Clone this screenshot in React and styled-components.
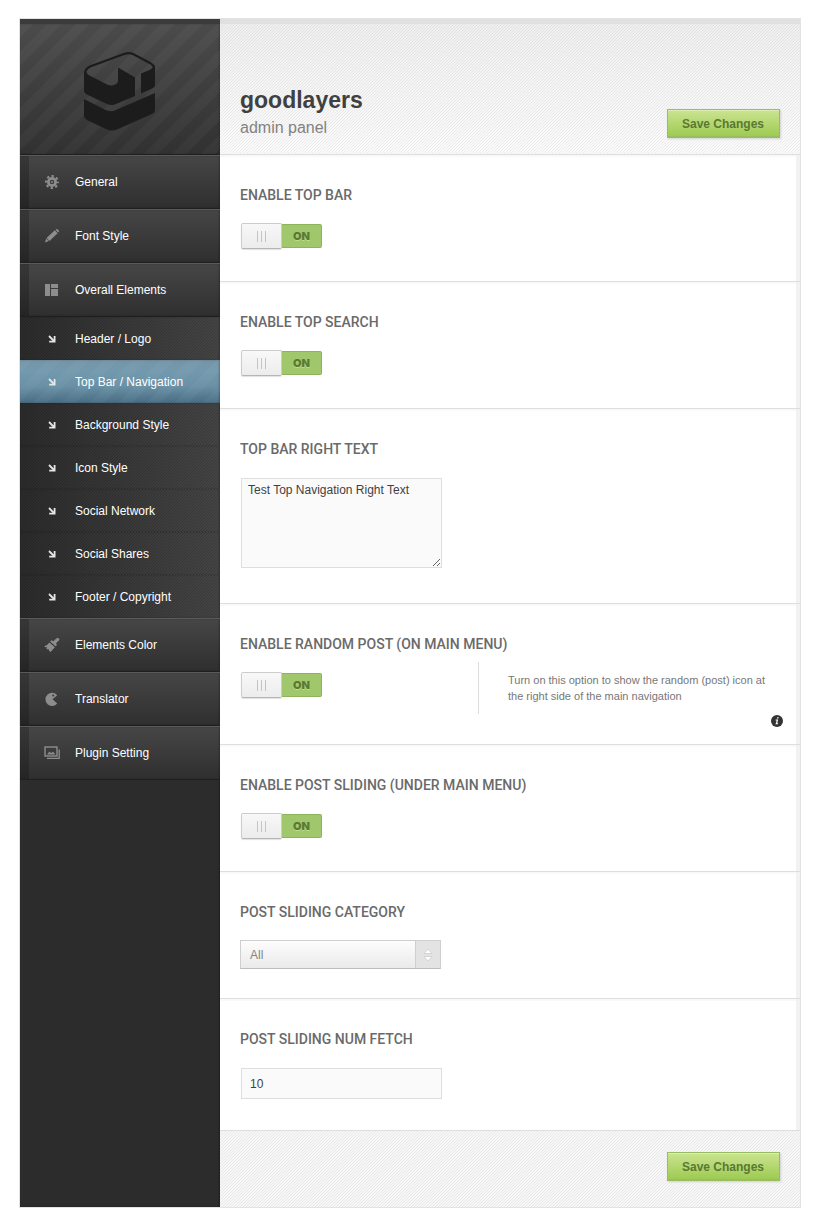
import React from 'react';
import styled, { createGlobalStyle, css } from 'styled-components';

const GlobalStyle = createGlobalStyle`
  body {
    margin: 0;
    background-color: #ffffff;
    font-family: "Liberation Sans", Arial, sans-serif;
    font-size: 12px;
  }

  *,
  *::before,
  *::after {
    box-sizing: border-box;
  }
`;

const hatch = css`
  background-image:
    linear-gradient(135deg, transparent 42%, rgba(0, 0, 0, 0.06) 42% 58%, transparent 58%),
    linear-gradient(${({ $flat }) => ($flat ? '#f7f7f7, #f7f7f7' : '#efefef, #fbfbfb')});
  background-size: 3px 3px, auto;
`;

const stripes = css`
  repeating-linear-gradient(135deg, rgba(255, 255, 255, 0.03) 0 9px, transparent 10px 19px, rgba(255, 255, 255, 0.03) 20px)
`;

const Panel = styled.div`
  display: grid;
  grid-template-columns: 200px 1fr;
  margin: 18px 17px 5px 19px;
  border: 1px solid #e3e3e3;
`;

const Sidebar = styled.aside`
  background-color: #2c2c2c;
  box-shadow: inset -1px 0 2px rgba(0, 0, 0, 0.3);
`;

const Brand = styled.div`
  display: flex;
  justify-content: center;
  height: 136px;
  padding-top: 28px;
  border-top: 5px solid #3b3b3b;
  border-bottom: 1px solid #1f1f1f;
  background-image: ${stripes}, linear-gradient(#4b4b4b, #313131);
  box-shadow: inset -1px 0 2px rgba(0, 0, 0, 0.2);
`;

const Menu = styled.ul`
  list-style: none;
  margin: 0;
  padding: 0;
`;

const MenuLink = styled.a`
  display: flex;
  align-items: center;
  height: 54px;
  border-top: 1px solid #5a5a5a;
  border-bottom: 1px solid #1f1f1f;
  background-image:
    linear-gradient(90deg, rgba(0, 0, 0, 0.22) 0 9px, transparent 9px),
    linear-gradient(#464646, #2f2f2f);
  box-shadow: inset -1px 0 2px rgba(0, 0, 0, 0.25);
  color: #ffffff;
  text-decoration: none;
`;

const MenuIcon = styled.span`
  display: flex;
  justify-content: center;
  width: 55px;
  padding-left: 9px;
  color: #8d8d8d;
`;

const SubLink = styled.a`
  display: flex;
  align-items: center;
  height: 43px;
  background-image: ${({ $active }) => ($active
    ? css`${stripes}, linear-gradient(#7395a8, #7399ae 25%, #6a91a6 60%, #496d83)`
    : css`
      linear-gradient(135deg, transparent 42%, rgba(0, 0, 0, 0.16) 42% 58%, transparent 58%),
      linear-gradient(90deg, #2b2b2b, #454545)
    `)};
  background-size: ${({ $active }) => ($active ? 'auto' : '3px 3px, auto')};
  box-shadow: inset -1px 0 2px rgba(0, 0, 0, 0.25);
  color: #ffffff;
  text-decoration: none;
`;

const Content = styled.main`
  display: flex;
  flex-direction: column;
  min-width: 0;
`;

const Header = styled.header`
  display: flex;
  justify-content: space-between;
  align-items: flex-end;
  height: 136px;
  padding: 0 20px 16px;
  border-top: 5px solid #e0e0e0;
  border-bottom: 1px solid #dedede;
  ${hatch}
`;

const Brandline = styled.div`
  margin-bottom: -4px;
`;

const Title = styled.h1`
  margin: 0;
  color: #404040;
  font-size: 23px;
  line-height: 28px;
`;

const Subtitle = styled.p`
  margin: 0;
  color: #828282;
  font-size: 16px;
  line-height: 28px;
`;

const SaveButton = styled.button`
  height: 29px;
  padding: 1px 15px 0 14px;
  border: 1px solid #98bd62;
  border-bottom-width: 2px;
  background-image: linear-gradient(#cbe490, #9ecb53);
  box-shadow: inset 0 1px 0 #dcedb0, 1px 1px 2px rgba(0, 0, 0, 0.15);
  color: #5b7833;
  font-family: inherit;
  font-size: 12px;
  font-weight: bold;
`;

const Section = styled.section`
  position: relative;
  padding: 30px 20px 29px;
  border-bottom: 1px solid #dedede;
  background-color: #ffffff;
  box-shadow: inset -4px 0 0 #f2f2f2, inset 0 2px 1px #f9f9f9;
`;

const Label = styled.label`
  display: block;
  margin-bottom: 18px;
  color: #6a6a6a;
  font-family: Roboto, Arial, sans-serif;
  font-size: 14px;
  font-weight: 500;
  line-height: 20px;
`;

const Row = styled.div`
  display: grid;
  grid-template-columns: 238px 1fr;
  align-items: start;
  min-height: 29px;
`;

const Switch = styled.span`
  position: relative;
  display: flex;
  width: 81px;
  height: 26px;
  margin-left: 1px;

  input {
    position: absolute;
    inset: 0;
    width: 100%;
    height: 100%;
    margin: 0;
    opacity: 0;
    cursor: pointer;
  }
`;

const Knob = styled.span`
  display: flex;
  align-items: center;
  justify-content: center;
  gap: 3px;
  width: 41px;
  height: 26px;
  border: 1px solid #cccccc;
  border-bottom-color: #b5b5b5;
  border-radius: 2px;
  background-image: linear-gradient(#f8f8f8, #ececec);
  box-shadow: 0 1px 1px rgba(0, 0, 0, 0.12);

  i {
    width: 1px;
    height: 11px;
    background-color: #c4c4c4;
  }
`;

const OnState = styled.span`
  flex: 1;
  height: 24px;
  margin-top: 1px;
  border: 1px solid #8db35b;
  border-left: 0;
  border-radius: 0 2px 2px 0;
  background-color: #a0c76b;
  color: #5a7b32;
  font-family: Inter, sans-serif;
  font-size: 11px;
  font-weight: 900;
  line-height: 22px;
  text-align: center;
  text-shadow: 0 1px 0 #bcdc8f;
`;

const TextArea = styled.textarea`
  display: block;
  width: 201px;
  height: 90px;
  margin: 1px 1px 6px;
  padding: 4px 6px;
  border: 1px solid #dedede;
  background-color: #fafafa;
  color: #3f3f3f;
  font-family: inherit;
  font-size: 12px;
  line-height: 14px;
`;

const TextInput = styled.input`
  width: 201px;
  height: 31px;
  margin: 1px 1px 2px;
  padding: 0 8px;
  border: 1px solid #dedede;
  background-color: #fafafa;
  color: #3f3f3f;
  font-family: inherit;
  font-size: 12px;
`;

const SelectBox = styled.div`
  position: relative;
  width: 201px;
  height: 29px;

  select {
    appearance: none;
    width: 100%;
    height: 100%;
    padding: 0 36px 0 9px;
    border: 1px solid #cfcfcf;
    border-bottom-color: #bdbdbd;
    border-radius: 0;
    background-image: linear-gradient(#fdfdfd, #eaeaea);
    color: #858585;
    font-family: inherit;
    font-size: 12px;
  }
`;

const SelectArrows = styled.span`
  position: absolute;
  top: 1px;
  right: 1px;
  bottom: 1px;
  display: flex;
  align-items: center;
  justify-content: center;
  width: 25px;
  border-left: 1px solid #cfcfcf;
  background-color: #e3e3e3;
  pointer-events: none;
`;

const Description = styled.p`
  margin: -10px 0 1px;
  padding: 10px 0 10px 29px;
  border-left: 1px solid #dcdcdc;
  color: #777777;
  font-size: 11px;
  line-height: 16px;
`;

const InfoMark = styled.span`
  position: absolute;
  right: 17px;
  bottom: 17px;
  display: flex;
`;

const Footer = styled.footer`
  display: flex;
  justify-content: flex-end;
  align-items: flex-start;
  flex: 1;
  min-height: 76px;
  padding: 21px 20px 26px;
  ${hatch}
`;

const LogoMark = () => (
  <svg width="72" height="79" viewBox="0 0 72 79" aria-hidden="true">
    <path d="M1.200 21 Q1.200 17 6 14.500 L40 2 Q45 .2 49 2 L66 11 Q70 13.500 70 15.500" fill="none" stroke="#1c1c1c" strokeWidth="2.200" />
    <path d="M0 20 L2.300 20 Q2.800 22 5 23.300 L23 32.500 Q27 34.500 31 32.800 Q34 31.500 34 29.500 V15.500 L51 25.500 V44 L32 52 Q28 54 23 52 L3 42.500 Q0 41 0 38 Z" fill="#1c1c1c" />
    <path d="M57 21.500 L66 17.800 Q69 16.500 69 14 L71 14 V33 Q71 35 69 36 L57 41.500 Z" fill="#1c1c1c" />
    <path d="M0 47 L21 57.800 Q27 60.500 32 58 L71 41 V58 Q71 60.500 69 61.500 L33 77.500 Q28 79.500 23 77.500 L3 68 Q0 66.500 0 64 Z" fill="#1c1c1c" />
  </svg>
);

const icons = {
  gear: (
    <svg width="16" height="16" viewBox="0 0 16 16" fill="none" stroke="currentColor">
      <circle cx="8" cy="8" r="3.600" strokeWidth="2.800" />
      <circle cx="8" cy="8" r="6" strokeWidth="2" strokeDasharray="2.360 2.350" strokeDashoffset="1.200" />
      <circle cx="8" cy="8" r="1" fill="currentColor" stroke="none" />
    </svg>
  ),
  pencil: (
    <svg width="16" height="16" viewBox="0 0 16 16" fill="currentColor">
      <path d="M11.500 1.800 L12.500 1 Q13 .8 13.500 1.200 L15 2.700 Q15.200 3.200 14.900 3.700 L14 4.500 Z" />
      <path d="M10.800 2.300 L13.600 5.200 L5.500 13 L2.500 9.900 Z" />
      <path d="M2.200 10.600 L4.800 13.100 L1 14.600 Z" />
    </svg>
  ),
  blocks: (
    <svg width="16" height="16" viewBox="0 0 16 16" fill="currentColor">
      <path d="M1 2h5v12H1zM7 2h7v4H7zM7 7h7v7H7z" />
    </svg>
  ),
  brush: (
    <svg width="16" height="16" viewBox="0 0 16 16" fill="currentColor">
      <path d="M14 .8 L15.500 2.300 Q15.600 3.300 12 6.200 L13 8 L11.500 9.300 L6.200 4.600 L7.500 3.300 L9.500 4.300 Q12.500 .8 14 .8 Z" />
      <path d="M5.400 5.400 L10.900 10.200 L6.500 15 L4.900 13.600 L4.900 12.200 L3.600 12.500 L2.400 11.400 L3 9.900 L1.300 10.300 L.3 9.300 Q3.500 8.300 5.400 5.400 Z" />
    </svg>
  ),
  pacman: (
    <svg width="16" height="16" viewBox="0 0 16 16" fill="currentColor">
      <path d="M13.200 4.200 A6.600 6.600 0 1 0 13.200 12.400 L8.500 8.300 Z" />
      <circle cx="9.200" cy="4.400" r="1" fill="#3a3a3a" />
    </svg>
  ),
  pictures: (
    <svg width="16" height="16" viewBox="0 0 16 16" fill="none" stroke="currentColor">
      <rect x="1" y="2" width="12" height="9" strokeWidth="1.400" />
      <path d="M3 13.300 H15.200 V4.500" strokeWidth="1.300" />
      <path d="M3 9.500 L5.500 6.500 L7 8 L9 6.800 L11.500 9.500 Z" fill="currentColor" stroke="none" />
    </svg>
  ),
  arrow: (
    <svg width="8" height="8" viewBox="0 0 8 8" fill="none" stroke="#e6e6e6" strokeWidth="1.800">
      <path d="M1 1 L6 6" />
      <path d="M6.600 1 V6.600 H1.200" />
    </svg>
  ),
};

const MENU = [
  { label: 'General', icon: 'gear' },
  { label: 'Font Style', icon: 'pencil' },
  {
    label: 'Overall Elements',
    icon: 'blocks',
    items: [
      'Header / Logo',
      'Top Bar / Navigation',
      'Background Style',
      'Icon Style',
      'Social Network',
      'Social Shares',
      'Footer / Copyright',
    ],
  },
  { label: 'Elements Color', icon: 'brush' },
  { label: 'Translator', icon: 'pacman' },
  { label: 'Plugin Setting', icon: 'pictures' },
];

const ACTIVE_ITEM = 'Top Bar / Navigation';

const Toggle = ({ id }) => (
  <Switch>
    <Knob>
      <i />
      <i />
      <i />
    </Knob>
    <OnState>ON</OnState>
    <input id={id} type="checkbox" role="switch" defaultChecked />
  </Switch>
);

const Option = ({ id, label, description, children }) => (
  <Section>
    <Label htmlFor={id}>{label}</Label>
    <Row>
      {children}
      {description && <Description>{description}</Description>}
    </Row>
    {description && (
      <InfoMark>
        <svg width="12" height="12" viewBox="0 0 12 12" aria-hidden="true">
          <circle cx="6" cy="6" r="6" fill="#333333" />
          <path d="M6.200 2.200h1.500l-.3 1.400H5.900zM4.700 4.500h2.400l-.8 3.800h.8l-.2 1H4.300l.2-.9h.5l.6-2.900h-1z" fill="#ffffff" />
        </svg>
      </InfoMark>
    )}
  </Section>
);

const App = () => (
  <>
    <GlobalStyle />
    <Panel>
      <Sidebar>
        <Brand><LogoMark /></Brand>
        <nav>
          <Menu>
            {MENU.map(({ label, icon, items }) => (
              <li key={label}>
                <MenuLink href="#">
                  <MenuIcon>{icons[icon]}</MenuIcon>
                  {label}
                </MenuLink>
                {items && (
                  <Menu>
                    {items.map((item) => (
                      <li key={item}>
                        <SubLink href="#" $active={item === ACTIVE_ITEM}>
                          <MenuIcon>{icons.arrow}</MenuIcon>
                          {item}
                        </SubLink>
                      </li>
                    ))}
                  </Menu>
                )}
              </li>
            ))}
          </Menu>
        </nav>
      </Sidebar>
      <Content>
        <Header>
          <Brandline>
            <Title>goodlayers</Title>
            <Subtitle>admin panel</Subtitle>
          </Brandline>
          <SaveButton type="button">Save Changes</SaveButton>
        </Header>
        <Option id="top-bar" label="ENABLE TOP BAR">
          <Toggle id="top-bar" />
        </Option>
        <Option id="top-search" label="ENABLE TOP SEARCH">
          <Toggle id="top-search" />
        </Option>
        <Option id="right-text" label="TOP BAR RIGHT TEXT">
          <TextArea id="right-text" defaultValue="Test Top Navigation Right Text" />
        </Option>
        <Option
          id="random-post"
          label="ENABLE RANDOM POST (ON MAIN MENU)"
          description="Turn on this option to show the random (post) icon at the right side of the main navigation"
        >
          <Toggle id="random-post" />
        </Option>
        <Option id="post-sliding" label="ENABLE POST SLIDING (UNDER MAIN MENU)">
          <Toggle id="post-sliding" />
        </Option>
        <Option id="category" label="POST SLIDING CATEGORY">
          <SelectBox>
            <select id="category" defaultValue="All">
              <option>All</option>
            </select>
            <SelectArrows>
              <svg width="10" height="14" viewBox="0 0 10 14" aria-hidden="true">
                <path d="M1 5.500 L5 1 L9 5.500 Z M1 8.500 L5 13 L9 8.500 Z" fill="#ffffff" stroke="#cccccc" strokeWidth=".8" />
              </svg>
            </SelectArrows>
          </SelectBox>
        </Option>
        <Option id="num-fetch" label="POST SLIDING NUM FETCH">
          <TextInput id="num-fetch" type="text" defaultValue="10" />
        </Option>
        <Footer $flat>
          <SaveButton type="button">Save Changes</SaveButton>
        </Footer>
      </Content>
    </Panel>
  </>
);

export default App;
